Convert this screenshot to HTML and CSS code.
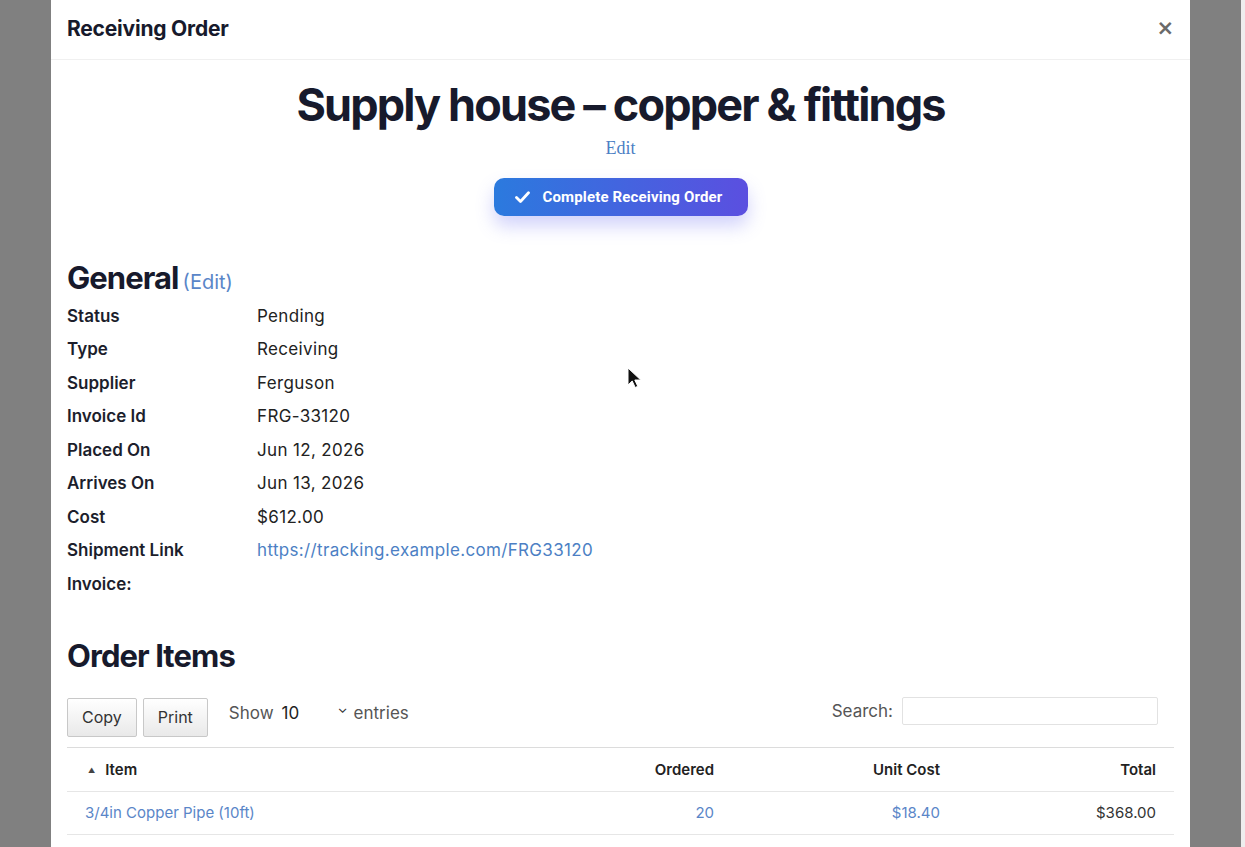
FILE: index.html
```html
<!doctype html>
<html lang="en">
  <head>
    <meta charset="UTF-8" />
    <meta name="viewport" content="width=device-width, initial-scale=1.0" />
    <title>Receiving Order</title>
    <link rel="stylesheet" href="styles.css">
  </head>
  <body>
    <div class="backdrop">
      <div class="modal">
        <div class="modal-header">
          <h5 class="modal-title">Receiving Order</h5>
          <button class="close" type="button">&times;</button>
        </div>

        <div class="modal-body">
          <div class="order-head">
            <h1 class="order-name">Supply house – copper &amp; fittings</h1>
            <a class="edit-link" href="#">Edit</a>
            <button class="complete-btn" type="button">
              <svg width="15" height="12" viewBox="0 0 15 12">
                <path d="M1.5 6.5l4 4L13.5 1.8" fill="none" stroke="#fff" stroke-width="2.8" stroke-linecap="round" stroke-linejoin="round" />
              </svg>
              Complete Receiving Order
            </button>
          </div>

          <h2 class="section-title">General<a href="#" class="section-edit">(Edit)</a></h2>
          <dl class="details">
            <dt>Status</dt><dd>Pending</dd>
            <dt>Type</dt><dd>Receiving</dd>
            <dt>Supplier</dt><dd>Ferguson</dd>
            <dt>Invoice Id</dt><dd>FRG-33120</dd>
            <dt>Placed On</dt><dd>Jun 12, 2026</dd>
            <dt>Arrives On</dt><dd>Jun 13, 2026</dd>
            <dt>Cost</dt><dd>$612.00</dd>
            <dt>Shipment Link</dt><dd><a href="#">https://tracking.example.com/FRG33120</a></dd>
            <dt>Invoice:</dt><dd></dd>
          </dl>

          <h2 class="section-title items-title">Order Items</h2>
          <div class="table-tools">
            <div class="tools-left">
              <button class="dt-btn" type="button">Copy</button>
              <button class="dt-btn" type="button">Print</button>
              <label class="length">Show
                <span class="select">10 <span class="chev">&#8964;</span></span>
                entries</label>
            </div>
            <label class="search">Search: <input type="text" /></label>
          </div>

          <table class="items">
            <thead>
              <tr>
                <th class="sorted"><span class="sort-arrow">&#9650;</span>Item</th>
                <th class="num">Ordered</th>
                <th class="num">Unit Cost</th>
                <th class="num">Total</th>
              </tr>
            </thead>
            <tbody>
              <tr>
                <td><a href="#">3/4in Copper Pipe (10ft)</a></td>
                <td class="num"><a href="#">20</a></td>
                <td class="num"><a href="#">$18.40</a></td>
                <td class="num">$368.00</td>
              </tr>
            </tbody>
          </table>
        </div>
      </div>
    </div>

    <svg class="cursor" width="16" height="24" viewBox="0 0 16 24">
      <path d="M1 1v17l4.2-4 3 6.5 2.6-1.2-3-6.3h6z" fill="#111" stroke="#fff" stroke-width="1" />
    </svg>
  </body>
</html>
```

FILE: styles.css
```css
body {
  margin: 0;
  background: #808080;
  font-family: Inter, "Noto Sans", sans-serif;
  color: #1a1c2b;
  overflow: hidden;
  height: 847px;
}

.backdrop {
  display: flex;
  padding-left: 51px;
  border-right: 4px solid #eeeeee;
  height: 847px;
  box-sizing: border-box;
}

.modal {
  width: 1139px;
  background: #fff;
}

.modal-header {
  display: flex;
  align-items: center;
  justify-content: space-between;
  height: 60px;
  padding: 0 16px 3px;
  border-bottom: 1px solid #f0f0f0;
  box-sizing: border-box;
}

.modal-title {
  margin: 0;
  font-size: 21px;
  font-weight: 700;
  letter-spacing: -0.01em;
  color: #171a2c;
}

.close {
  border: 0;
  background: none;
  padding: 0;
  font-family: "DejaVu Sans", sans-serif;
  font-size: 21px;
  font-weight: 700;
  color: #6a6a6a;
  line-height: 1;
}

.modal-body {
  padding: 0 16px;
}

.order-head {
  display: flex;
  flex-direction: column;
  align-items: center;
  padding-top: 20px;
}

.order-name {
  margin: 0;
  font-size: 45px;
  font-weight: 700;
  letter-spacing: -0.041em;
  line-height: 50px;
  color: #171a2c;
}

.edit-link {
  margin-top: 8px;
  font-family: "Liberation Serif", serif;
  font-size: 18px;
  color: #4c7fc4;
  text-decoration: none;
}

.complete-btn {
  display: flex;
  align-items: center;
  gap: 13px;
  margin-top: 19px;
  width: 254px;
  height: 38px;
  padding: 0 0 0 21px;
  border: 0;
  border-radius: 10px;
  background: linear-gradient(90deg, #2b7ade, #5b4fe0);
  box-shadow: 0 10px 18px rgba(92, 96, 240, 0.28);
  font-family: Roboto, sans-serif;
  font-size: 15px;
  font-weight: 700;
  letter-spacing: 0.01em;
  color: #fff;
}

.section-title {
  margin: 47px 0 2px;
  font-size: 31px;
  font-weight: 700;
  letter-spacing: -0.03em;
  line-height: 30px;
  color: #171a2c;
}

.section-edit {
  margin-left: 4px;
  font-size: 20px;
  font-weight: 400;
  letter-spacing: 0;
  color: #5a86c8;
  text-decoration: none;
}

.details {
  display: grid;
  grid-template-columns: 190px 1fr;
  grid-auto-rows: 33.5px;
  margin: 0;
  font-size: 17px;
  align-items: center;
}

.details dt {
  font-weight: 600;
  color: #1c1e2c;
}

.details dd {
  margin: 0;
  color: #222;
  letter-spacing: 0.02em;
}

.details a {
  color: #4c7fc4;
  text-decoration: none;
}

.items-title {
  margin: 40px 0 26px;
}

.table-tools {
  display: flex;
  justify-content: space-between;
  align-items: flex-start;
  padding-right: 16px;
  color: #555;
  font-size: 17px;
}

.tools-left {
  display: flex;
  align-items: flex-start;
  gap: 6px;
}

.dt-btn {
  height: 39px;
  padding: 0 14px;
  margin-top: 1px;
  border: 1px solid #c8c8c8;
  border-radius: 2px;
  background: linear-gradient(#fff, #e9e9e9);
  font-family: Inter, sans-serif;
  font-size: 16px;
  color: #333;
}

.length {
  display: flex;
  align-items: center;
  height: 32px;
  margin-left: 15px;
}

.select {
  display: inline-flex;
  justify-content: space-between;
  width: 66px;
  margin: 0 6px 0 8px;
  color: #222;
}

.chev {
  font-size: 13px;
  line-height: 10px;
  color: #333;
}

.search {
  display: flex;
  align-items: center;
  gap: 9px;
  height: 28px;
}

.search input {
  width: 256px;
  height: 28px;
  border: 1px solid #e2e2e2;
  border-radius: 2px;
  box-sizing: border-box;
}

.items {
  width: 100%;
  margin-top: 10px;
  border-collapse: collapse;
  border-top: 1px solid #dcdcdc;
  font-size: 15px;
}

.items th,
.items td {
  padding: 0 18px;
  height: 43px;
  text-align: left;
  border-bottom: 1px solid #e6e6e6;
}

.items th {
  font-weight: 600;
  color: #222;
}

.items td {
  color: #333;
  height: 42px;
}

.items .num {
  text-align: right;
}

.items th:nth-child(2) { width: 150px; }
.items th:nth-child(3) { width: 190px; }
.items th:nth-child(4) { width: 180px; }

.sort-arrow {
  display: inline-block;
  font-size: 7px;
  vertical-align: 2px;
  margin: 0 10px 0 3px;
  color: #444;
}

.items a {
  color: #5a86c8;
  text-decoration: none;
}

.cursor {
  position: absolute;
  left: 627px;
  top: 367px;
}
```
